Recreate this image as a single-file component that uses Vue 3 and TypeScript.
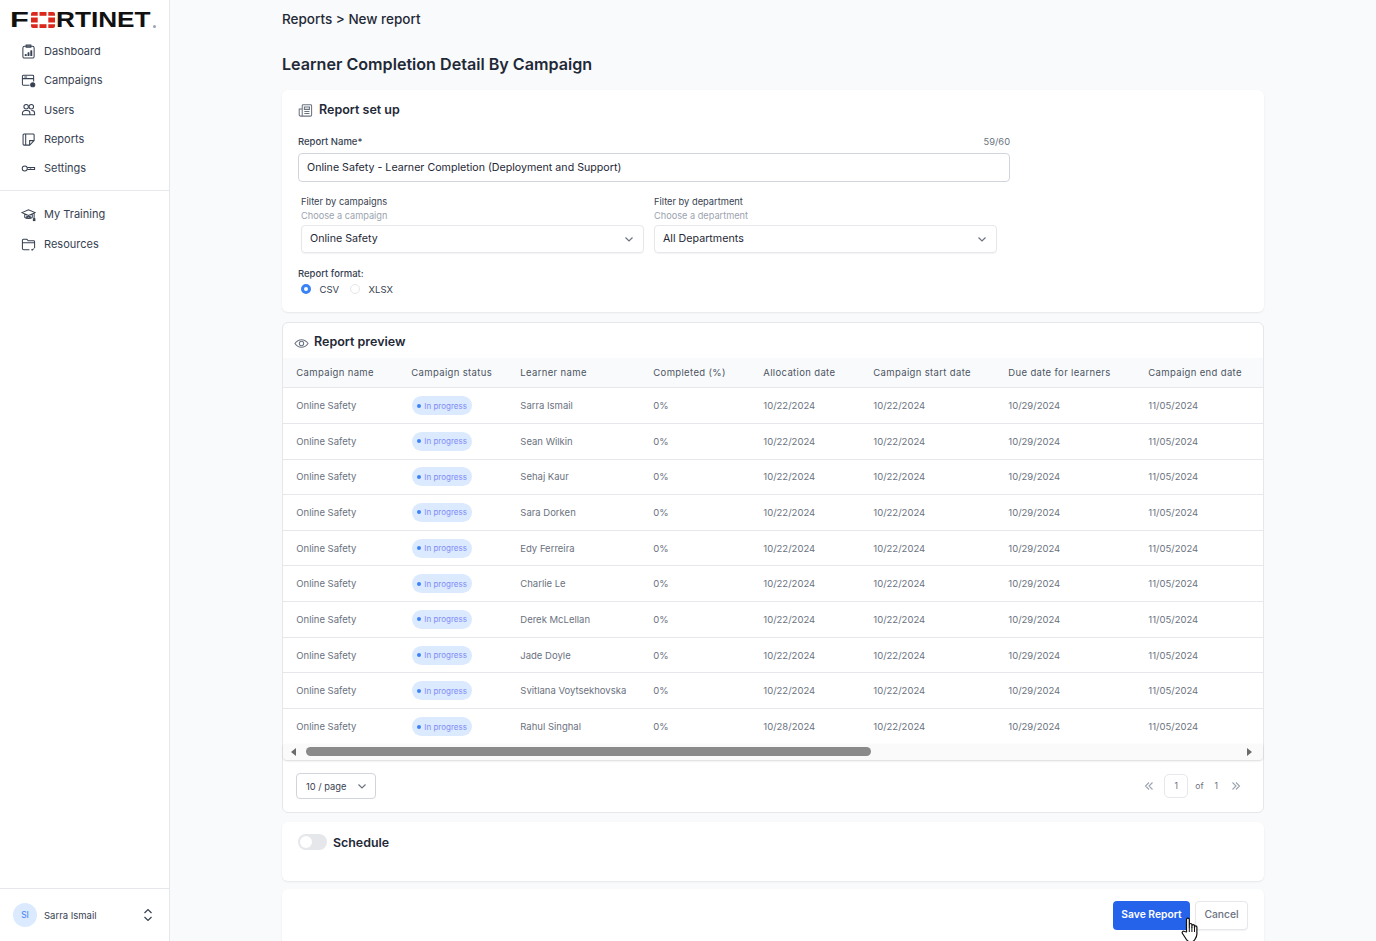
<script setup lang="ts">
const names: string[] = ['Sarra Ismail','Sean Wilkin','Sehaj Kaur','Sara Dorken','Edy Ferreira','Charlie Le','Derek McLellan','Jade Doyle','Svitlana Voytsekhovska','Rahul Singhal']
const rows = names.map((n, i) => ({ name: n, alloc: i === 9 ? '10/28/2024' : '10/22/2024' }))
const heads: string[] = ['Campaign name','Campaign status','Learner name','Completed (%)','Allocation date','Campaign start date','Due date for learners','Campaign end date']
</script>

<template>
  <div class="app">
    <aside class="side">
      <div class="logo">
        <span class="lgbox f"><span class="lg lg-f">F</span></span>
        <svg class="lgo" width="24" height="16" viewBox="0 0 24 16"><g fill="#da291c"><path d="M2 0h4.700v3.800H0V2a2 2 0 0 1 2-2z"/><rect x="8.500" y="0" width="7" height="3.800"/><path d="M17.300 0H22a2 2 0 0 1 2 2v1.800h-6.700z"/><rect x="0" y="5.500" width="6.700" height="5"/><rect x="17.300" y="5.500" width="6.700" height="5"/><path d="M0 12.200h6.700V16H2a2 2 0 0 1-2-2z"/><rect x="8.500" y="12.200" width="7" height="3.800"/><path d="M17.300 12.200H24V14a2 2 0 0 1-2 2h-4.700z"/></g></svg>
        <span class="lgbox r"><span class="lg lg-r">RTINET</span></span>
        <span class="reg"></span>
      </div>
      <nav class="nav">
        <a class="item">
          <svg viewBox="0 0 16 16" class="ic"><rect x="2" y="2.500" width="12" height="12.500" rx="1.800"/><path d="M5.500 3.500V1.200h5v2.300zM5 12.800V11M8 12.800V9M11 12.800V6.800" /><path d="M5 12.800V11M8 12.800V9M11 12.800V6.800" stroke-width="2"/></svg>
          Dashboard
        </a>
        <a class="item">
          <svg viewBox="0 0 16 16" class="ic"><path d="M9 13H2.500a1 1 0 0 1-1-1V3.500a1 1 0 0 1 1-1h10a1 1 0 0 1 1 1V9M1.500 6h12M3.500 4.300h3"/><circle cx="12.500" cy="12.500" r="2.200" fill="#374151"/></svg>
          Campaigns
        </a>
        <a class="item">
          <svg viewBox="0 0 16 16" class="ic"><circle cx="5.500" cy="5" r="2.400"/><circle cx="11" cy="5" r="2.400"/><path d="M1.500 13.500v-1.500a3 3 0 0 1 3-3h2a3 3 0 0 1 3 3v1.500zM11 9h.5a3 3 0 0 1 3 3v1.500h-5"/></svg>
          Users
        </a>
        <a class="item">
          <svg viewBox="0 0 16 16" class="ic"><path d="M3.200 14h6l4.800-4.800V3.200a1 1 0 0 0-1-1H3.200a1 1 0 0 0-1 1V13a1 1 0 0 0 1 1zM9.200 14V9.200H14M5 2.200V14"/></svg>
          Reports
        </a>
        <a class="item">
          <svg viewBox="0 0 16 16" class="ic"><circle cx="4" cy="8" r="2.700"/><path d="M6.700 7h7.800v2H11l-.8-.6-.8.6H6.700"/></svg>
          Settings
        </a>
      </nav>
      <div class="rule"></div>
      <nav class="nav second">
        <a class="item">
          <svg viewBox="0 0 16 16" class="ic"><path d="M1 6l7-3 7 3-7 3zM4 7.500v3.500c1.500 1.700 6.500 1.700 8 0V7.500M14 6.500V13" /><path d="M5.500 9.500l5 2M10.500 9.500l-5 2"/><rect x="13.200" y="12.500" width="1.600" height="2" fill="#374151"/></svg>
          My Training
        </a>
        <a class="item">
          <svg viewBox="0 0 16 16" class="ic"><path d="M9 13.500H3a1.500 1.500 0 0 1-1.500-1.500V3.500A1 1 0 0 1 2.500 2.500h3.800l1.400 1.500h5.800a1 1 0 0 1 1 1V12M1.500 6.200h13M11 13.300l1 .7 1.500-1.500"/></svg>
          Resources
        </a>
      </nav>
      <div class="user">
        <span class="avatar">SI</span>
        <span class="uname">Sarra Ismail</span>
        <svg viewBox="0 0 12 16" class="updown"><path d="M2.500 6L6 2.500 9.500 6M2.500 10L6 13.500 9.500 10"/></svg>
      </div>
    </aside>

    <main class="main">
      <div class="crumb">Reports &gt; New report</div>
      <h1 class="title">Learner Completion Detail By Campaign</h1>

      <section class="card setup">
        <h2 class="h2">
          <svg viewBox="0 0 16 16" class="h2ic"><path d="M4.500 13.800V2.800a1 1 0 0 1 1-1h8a1 1 0 0 1 1 1v10a1.200 1.200 0 0 1-1.200 1.200H2.800a1.500 1.500 0 0 1-1.500-1.500V6.500h3.200M6.800 4.300h5.400v2.500H6.800zM6.800 9h5.400M6.800 11.200h5.400"/></svg>
          Report set up
        </h2>
        <div class="name-wrap">
          <div class="name-labels"><label class="lbl">Report Name*</label><span class="count">59/60</span></div>
          <div class="input">Online Safety - Learner Completion (Deployment and Support)</div>
        </div>
        <div class="filters">
          <div class="filter">
            <div class="flabel">Filter by campaigns</div>
            <div class="fhint">Choose a campaign</div>
            <div class="select"><span>Online Safety</span><svg viewBox="0 0 12 12" class="chev"><path d="M2.500 4.500L6 8l3.500-3.500"/></svg></div>
          </div>
          <div class="filter">
            <div class="flabel">Filter by department</div>
            <div class="fhint">Choose a department</div>
            <div class="select"><span>All Departments</span><svg viewBox="0 0 12 12" class="chev"><path d="M2.500 4.500L6 8l3.500-3.500"/></svg></div>
          </div>
        </div>
        <div class="lbl fmt">Report format:</div>
        <div class="radios">
          <span class="radio on"></span><span class="rlabel">CSV</span>
          <span class="radio off"></span><span class="rlabel">XLSX</span>
        </div>
      </section>

      <section class="card preview">
        <h2 class="h2 ph">
          <svg viewBox="0 0 16 16" class="eye"><path d="M1 8c1.800-2.600 4.200-4 7-4s5.200 1.400 7 4c-1.800 2.600-4.200 4-7 4s-5.200-1.400-7-4z"/><circle cx="8" cy="8" r="2.300"/></svg>
          Report preview
        </h2>
        <div class="table">
          <div class="tr thead"><div v-for="h in heads" :key="h" class="th">{{ h }}</div></div>
          <div v-for="r in rows" :key="r.name" class="tr tbody">
            <div class="td">Online Safety</div>
            <div class="td"><span class="badge"><i class="dot"></i>In progress</span></div>
            <div class="td">{{ r.name }}</div>
            <div class="td">0%</div>
            <div class="td">{{ r.alloc }}</div>
            <div class="td">10/22/2024</div>
            <div class="td">10/29/2024</div>
            <div class="td">11/05/2024</div>
          </div>
          <div class="scroll">
            <span class="arr left"></span>
            <span class="thumb"></span>
            <span class="arr right"></span>
          </div>
        </div>
        <div class="pager">
          <div class="per"><span class="ptext">10 / page</span><svg viewBox="0 0 12 12" class="chev"><path d="M2.500 4.500L6 8l3.500-3.500"/></svg></div>
          <div class="pages">
            <svg viewBox="0 0 12 12" class="dbl"><path d="M6 2.500L2.500 6 6 9.500M9.500 2.500L6 6l3.500 3.500"/></svg>
            <span class="pnum">1</span>
            <span class="of">of</span>
            <span class="tot">1</span>
            <svg viewBox="0 0 12 12" class="dbl"><path d="M2.500 2.500L6 6 2.500 9.500M6 2.500L9.500 6 6 9.500"/></svg>
          </div>
        </div>
      </section>

      <section class="card sched">
        <span class="toggle"><i></i></span>
        <span class="stitle">Schedule</span>
      </section>

      <section class="card foot">
        <button class="btn primary">Save Report</button>
        <button class="btn ghost">Cancel</button>
        <svg class="hand" viewBox="0 0 18 26" width="18" height="26"><path d="M5.500 15V2.500a1.400 1.400 0 0 1 2.800 0V10V7.800a1.300 1.300 0 0 1 2.600 0V10.500V9a1.300 1.300 0 0 1 2.600 0v2V10a1.200 1.200 0 0 1 2.400 0v7c0 2.500-1 4-2 5.500-.8 1.200-2 2.500-4 2.500-2.500 0-3.500-1-4.500-2.500L1.500 16.500c-1-1.500.6-3 2-2z" fill="#fff" stroke="#111" stroke-width="1.200" stroke-linejoin="round"/><path d="M8.300 10v5M10.900 10.500v4.500M13.500 11v4" stroke="#111" fill="none"/></svg>
      </section>
    </main>
  </div>
</template>

<style>
html, body { margin: 0; background: #f9fafb; }
</style>

<style scoped>
.app { display: flex; height: 941px; overflow: hidden; font-family: Inter, "Liberation Sans", sans-serif; color: #111827; background: #f9fafb; }
.side { width: 169px; flex: none; background: #fff; border-right: 1px solid #e5e7eb; display: flex; flex-direction: column; }
.logo { display: flex; align-items: center; height: 20px; margin: 10px 0 0 12px; position: relative; }
.lgbox { display: block; height: 20px; flex: none; }
.lgbox.f { width: 18px; margin-right: 1px; }
.lgbox.r { width: 95px; margin-left: 2px; }
.lg { font-family: "Liberation Sans", sans-serif; font-weight: 700; font-size: 22px; line-height: 20px; color: #111; transform-origin: left center; display: inline-block; }
.lg-f { transform: translateX(-2px) scaleX(1.4); }
.lg-r { transform: translateX(-1px) scaleX(1.19); }
.reg { position: absolute; left: 141px; top: 15px; width: 3px; height: 3px; border-radius: 50%; background: #9ca3af; }
.lgo { flex: none; }
.nav { display: flex; flex-direction: column; margin-top: 6.500px; }
.item { display: flex; align-items: center; gap: 8px; height: 29.300px; padding-left: 21px; font-size: 11px; color: #374151; }
.ic { width: 15px; height: 15px; fill: none; stroke: #374151; stroke-width: 1.100; flex: none; }
.rule { height: 1px; background: #e5e7eb; margin-top: 7px; }
.second { margin-top: 8.400px; }
.second .item { height: 30px; }
.user { margin-top: auto; height: 52px; border-top: 1px solid #e5e7eb; display: flex; align-items: center; padding: 0 15px 0 13px; font-size: 9.500px; color: #374151; }
.avatar { width: 24px; height: 24px; border-radius: 50%; background: #dbeafe; color: #3b82f6; display: flex; align-items: center; justify-content: center; font-size: 8.500px; }
.uname { margin-left: 7px; flex: 1; }
.updown { width: 12px; height: 16px; fill: none; stroke: #374151; stroke-width: 1.200; }

.main { flex: 1; min-width: 0; padding: 0 112px 0 112px; }
.crumb { font-size: 13.500px; font-weight: 500; line-height: 16px; margin-top: 11px; color: #1f2937; }
.title { margin: 27px 0 0; font-size: 16.130px; font-weight: 600; line-height: 20px; color: #1f2937; }
.card { background: #fff; border-radius: 6px; box-shadow: 0 1px 2px rgba(0,0,0,.08); }
.setup { margin-top: 16px; height: 222px; padding: 11px 16px 0; box-sizing: border-box; }
.h2 { margin: 0; display: flex; align-items: center; gap: 6px; font-size: 12.500px; font-weight: 600; line-height: 18px; color: #1f2937; }
.h2ic { width: 15px; height: 15px; fill: none; stroke: #6b7280; stroke-width: 1.100; }
.name-wrap { width: 712px; margin-top: 14px; }
.name-labels { display: flex; justify-content: space-between; align-items: center; height: 16px; }
.lbl { font-size: 9.500px; font-weight: 500; color: #374151; }
.count { font-size: 9.300px; color: #6b7280; }
.input { margin-top: 4px; height: 29px; box-sizing: border-box; border: 1px solid #d1d5db; border-radius: 4px; padding: 0 8px; display: flex; align-items: center; font-size: 10.660px; color: #1f2937; }
.filters { display: flex; gap: 10px; margin: 13px 0 0 3px; }
.filter { width: 343px; }
.flabel { font-size: 9.300px; line-height: 14px; color: #374151; }
.fhint { font-size: 9.200px; line-height: 14px; color: #9ca3af; }
.select { margin-top: 2px; height: 28px; box-sizing: border-box; border: 1px solid #e5e7eb; border-radius: 4px; box-shadow: 0 1px 1px rgba(0,0,0,.05); padding: 0 8px 1px; display: flex; align-items: center; justify-content: space-between; font-size: 10.700px; color: #1f2937; }
.chev { width: 12px; height: 12px; fill: none; stroke: #6b7280; stroke-width: 1.200; flex: none; }
.fmt { margin-top: 14px; line-height: 14px; }
.radios { display: flex; align-items: center; margin: 1px 0 0 3px; height: 14px; font-size: 9.500px; color: #374151; }
.radio { width: 10px; height: 10px; border-radius: 50%; box-sizing: border-box; flex: none; }
.radio.on { border: 3px solid #3b82f6; background: #fff; }
.radio.off { border: 1px solid #e5e7eb; margin-left: 11px; }
.rlabel { margin-left: 8.500px; }

.preview { margin-top: 10px; height: 491px; border: 1px solid #e5e7eb; box-sizing: border-box; box-shadow: none; }
.ph { padding: 3px 0 0 11px; gap: 5px; height: 35px; box-sizing: border-box; }
.eye { width: 15px; height: 15px; fill: none; stroke: #6b7280; stroke-width: 1.100; margin-top: 3px; }
.tr { display: grid; grid-template-columns: 115px 109px 133px 110px 110px 135px 140px 1fr; padding-left: 13.300px; box-sizing: border-box; align-items: center; }
.thead { height: 30.200px; background: #f9fafb; border-bottom: 1px solid #e5e7eb; font-size: 9.500px; letter-spacing: .35px; color: #4b5563; font-weight: 400; }
.tbody { height: 35.670px; border-bottom: 1px solid #e5e7eb; font-size: 9.500px; color: #6b7280; }
.tbody:nth-last-child(2) { border-bottom: 0; }
.badge { display: inline-flex; align-items: center; gap: 3px; height: 19px; margin-left: .5px; padding: 0 5.500px; border-radius: 10px; background: #dbeafe; color: #818cf8; font-size: 8px; }
.dot { width: 4px; height: 4px; border-radius: 50%; background: #3b82f6; }
.scroll { height: 16px; margin-top: -1.200px; background: #fafafa; display: flex; align-items: center; box-shadow: 0 1px 2px rgba(0,0,0,.15); border-radius: 0 0 4px 4px; padding: 0 11px 0 8px; }
.thumb { width: 565px; height: 9px; border-radius: 5px; background: #8a8a8a; margin-left: 10px; }
.arr { width: 0; height: 0; border-top: 4px solid transparent; border-bottom: 4px solid transparent; flex: none; }
.arr.left { border-right: 5px solid #6b6b6b; }
.arr.right { border-left: 5px solid #6b6b6b; margin-left: auto; }
.pager { display: flex; justify-content: space-between; align-items: center; padding: 13px 21px 0 13px; }
.per { width: 80px; height: 26px; box-sizing: border-box; border: 1px solid #d1d5db; border-radius: 4px; display: flex; align-items: center; justify-content: space-between; padding: 0 7px 0 9px; font-size: 9.300px; color: #374151; }
.ptext { padding-top: 2px; }
.pages { display: flex; align-items: center; font-size: 8.500px; color: #6b7280; padding-top: 1px; }
.dbl { width: 12px; height: 12px; fill: none; stroke: #9ca3af; stroke-width: 1.100; }
.pnum { width: 24px; height: 24px; box-sizing: border-box; border: 1px solid #e5e7eb; border-radius: 5px; display: flex; align-items: center; justify-content: center; margin: 0 7px 0 9px; }
.of { margin-right: 11px; }
.tot { margin-right: 12px; }

.sched { margin-top: 9px; height: 59px; display: flex; align-items: flex-start; padding: 12px 16px 0; box-sizing: border-box; }
.toggle { width: 29px; height: 16px; border-radius: 8px; background: #e5e7eb; display: flex; align-items: center; padding-left: 2px; box-sizing: border-box; flex: none; }
.toggle i { width: 12px; height: 12px; border-radius: 50%; background: #fff; }
.stitle { margin-left: 6px; font-size: 12.400px; font-weight: 600; line-height: 18px; color: #1f2937; }

.foot { position: relative; margin-top: 8px; height: 70px; display: flex; justify-content: flex-end; align-items: flex-start; gap: 5px; padding: 12px 16px 0; box-sizing: border-box; }
.btn { height: 29px; border-radius: 4px; font-family: inherit; font-size: 10.300px; padding: 0 0 3px; }
.primary { width: 77px; border: 0; background: #2563eb; color: #fff; font-weight: 600; }
.ghost { width: 53px; background: #fff; border: 1px solid #e5e7eb; color: #6b7280; font-weight: 500; box-shadow: 0 1px 1px rgba(0,0,0,.05); }
.hand { position: absolute; left: 899px; top: 28px; }
</style>
